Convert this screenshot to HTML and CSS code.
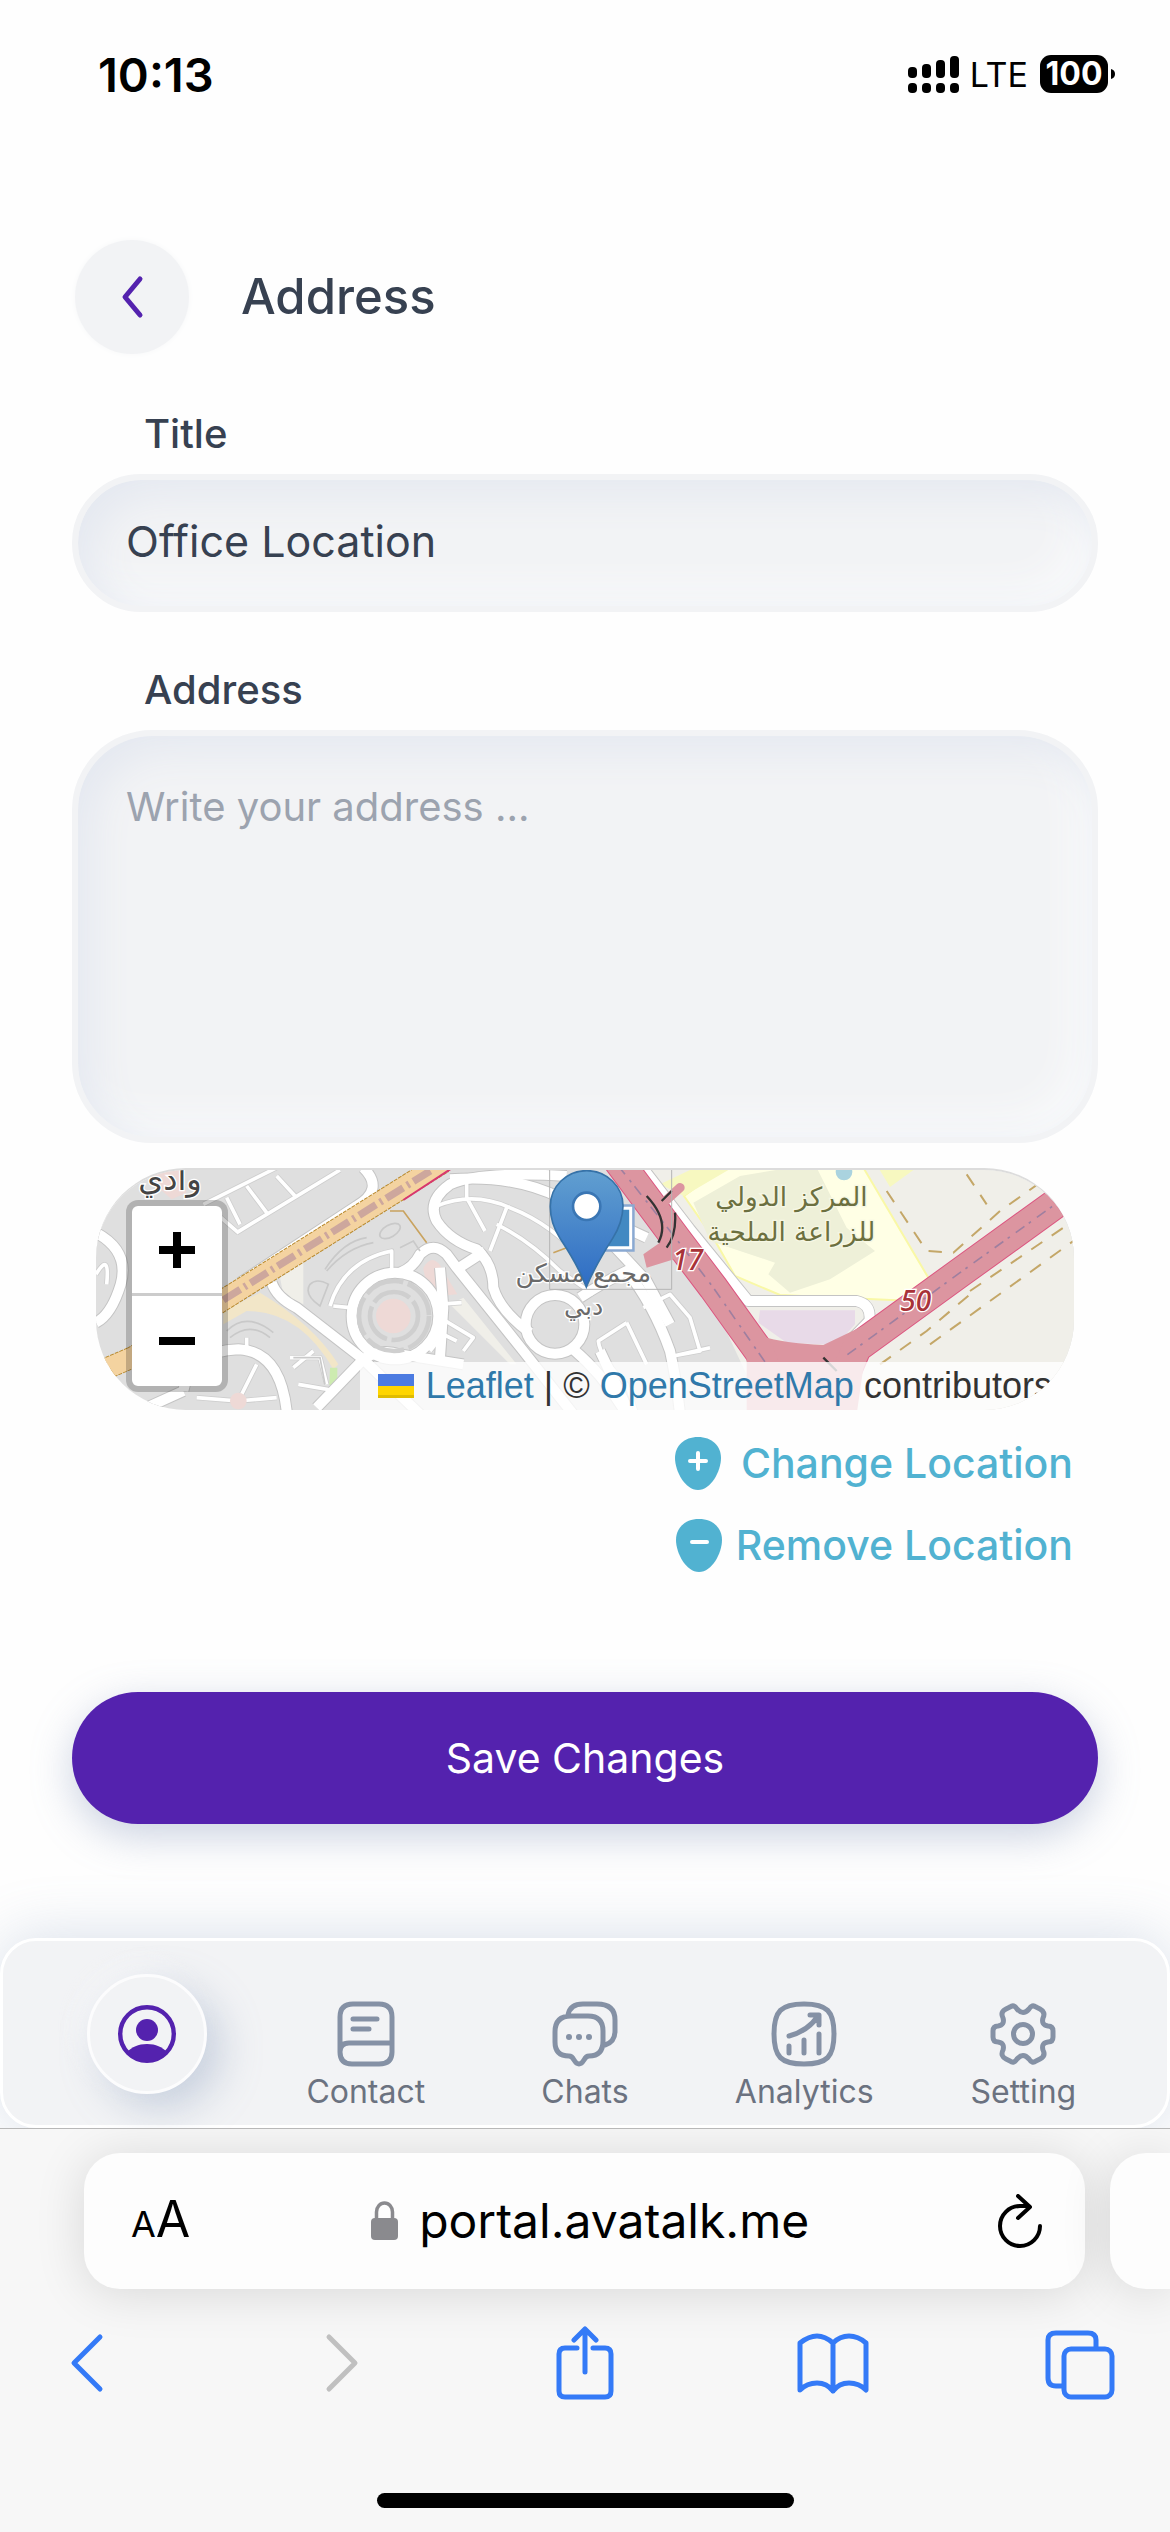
FILE: index.html
```html
<!DOCTYPE html>
<html lang="en">
<head>
<meta charset="utf-8">
<meta name="viewport" content="width=device-width, initial-scale=1">
<title>Address</title>
<link rel="stylesheet" href="styles.css">
</head>
<body>
<div class="status">
  <span class="status-time">10:13</span>
  <div class="status-right">
    <svg class="signal" viewBox="0 0 52 38" aria-hidden="true">
      <rect x="0" y="12" width="9" height="11" rx="4"/><rect x="14" y="9" width="9" height="14" rx="4"/><rect x="28" y="5" width="9" height="18" rx="4"/><rect x="42" y="1" width="9" height="22" rx="4"/>
      <rect x="0" y="28" width="9" height="10" rx="4"/><rect x="14" y="28" width="9" height="10" rx="4"/><rect x="28" y="28" width="9" height="10" rx="4"/><rect x="42" y="28" width="9" height="10" rx="4"/>
    </svg>
    <span class="network">LTE</span>
    <span class="battery">100</span>
    <svg class="battery-tip" viewBox="0 0 4 10" aria-hidden="true"><path d="M0 0Q4 1 4 5T0 10Z"/></svg>
  </div>
</div>

<main class="page">
  <header class="head">
    <button class="back" type="button" aria-label="Back"><svg viewBox="0 0 24 44"><path d="M20 4 5 22l15 18"/></svg></button>
    <h1 class="title">Address</h1>
  </header>

  <form class="form">
    <label class="label" for="title">Title</label>
    <input class="field" id="title" type="text" value="Office Location">
    <label class="label label-next" for="address">Address</label>
    <textarea class="field field-area" id="address" placeholder="Write your address ..."></textarea>

    <div class="map">
      <svg class="map-art" viewBox="48 57 2934 720" preserveAspectRatio="xMidYMid slice" aria-hidden="true">
        <defs>
          <g id="wide">
            <path d="M850 50Q915 115 830 165L480 395"/>
            <path d="M1460 75Q1200 60 1110 100Q1040 150 1070 210Q1110 270 1190 295Q1240 340 1240 410Q1260 480 1350 545"/>
            <path d="M1110 85Q1300 70 1440 140L1700 260"/>
            <path d="M575 395Q590 440 650 470L850 625L1020 790"/>
            <path d="M850 625Q900 590 960 610L1150 640"/>
            <path d="M960 365Q1000 350 1020 310Q1060 270 1100 310L1130 350L1330 600L1480 790"/>
            <path d="M1215 300L1130 355M1080 350L1090 470L1080 620"/>
            <path d="M48 245Q150 300 122 400Q95 490 48 515"/>
            <path d="M1500 440Q1560 400 1640 360Q1720 460 1770 600Q1790 690 1800 790"/>
            <path d="M1560 240L1700 390L1770 520"/>
            <path d="M1480 595Q1570 670 1640 790M1560 600L1650 790"/>
            <circle cx="1425" cy="520" r="88"/>
            <circle cx="945" cy="495" r="130"/>
            <path d="M310 720Q330 600 475 595Q600 600 620 780M200 770L310 720M850 625L710 770"/>
            <path d="M1680 40L1830 235L2005 450L2330 450Q2375 460 2368 510L2290 590"/>
          </g>
          <g id="narrow">
            <path d="M370 160L590 50M470 245L780 57M400 180L475 245M590 75L650 140M500 105L560 185M440 140L480 220"/>
            <path d="M1160 85V140L1215 240M1280 170L1230 300M1070 165Q1180 120 1290 170Q1420 220 1520 340M1250 220Q1350 270 1440 360L1540 430"/>
            <path d="M750 465Q790 330 935 300V370M760 465L810 470"/>
            <path d="M1070 460L1145 455M1080 500L1180 560L1150 600M1050 600L1090 550L1130 570"/>
            <path d="M1640 515L1555 570Q1560 620 1640 700L1670 790M1640 515L1700 640M1690 470L1770 430L1830 500L1860 600L1780 615L1890 590"/>
            <path d="M500 560V600M530 640L475 750L350 740M475 750L590 740M630 620L720 620L740 700"/>
            <path d="M640 650L700 600M655 700L770 720"/>
            <path d="M48 370Q90 300 80 400"/>
          </g>
          <linearGradient id="pin" x1="0" y1="0" x2="0" y2="1"><stop offset="0" stop-color="#619fd0"/><stop offset="1" stop-color="#2e6cc4"/></linearGradient>
        </defs>
        <path class="m-home" d="M0 0H3000V800H0Z"/>
        <path class="m-land" d="M1680 40H3000V800H2060L1850 350Z"/>
        <path class="m-land" d="M600 380L670 330V460L610 430ZM1150 440L1310 640L1290 640L1110 460Z"/>
        <path class="m-sand" d="M430 480L540 425Q700 520 775 640L760 655Q660 480 500 480L430 520Z"/>
        <path class="m-green" d="M750 650H772V690L760 715L748 700Z"/>
        <path class="m-field" d="M1812 135L1930 50H2350L2545 380L2500 450L2100 432L1965 375L1900 260Z"/>
        <path class="m-lime" d="M1740 100L1830 57H1945L1812 135ZM2395 50H2510L2430 108Z"/>
        <path class="m-crop" d="M1840 155L1980 75L2130 50H2210L2300 230L2385 300L2250 385L2130 425L2065 370L2085 335L1890 270Z"/>
        <circle class="m-water" cx="2292" cy="63" r="25"/>
        <path class="m-lilac" d="M2040 478H2325V520L2270 582L2120 575L2035 515Z"/>
        <path class="m-pink" d="M1030 350Q1060 300 1090 360L1132 430L1075 435Q1030 390 1030 350ZM215 57H300L320 125L275 145L235 110ZM380 75L420 57"/>
        <g class="m-case-narrow"><use href="#narrow"/></g>
        <g class="m-case-wide"><use href="#wide"/></g>
        <g class="m-street-narrow"><use href="#narrow"/></g>
        <g class="m-street-wide"><use href="#wide"/></g>
        <circle class="m-ring" cx="942" cy="495" r="105"/><circle class="m-ring" cx="942" cy="495" r="72"/>
        <circle class="m-pink" cx="940" cy="495" r="52"/>
        <circle class="m-pink" cx="475" cy="750" r="25"/>
        <g class="m-block"><path d="M735 355Q790 270 860 260M740 360Q800 290 880 275"/><ellipse cx="930" cy="240" rx="34" ry="18" transform="rotate(-30 930 240)"/><path d="M690 400Q670 430 720 465L745 400Q710 380 690 400ZM960 290L1000 270L1020 300M440 540Q500 480 580 545M450 560Q510 510 570 560M640 620H720L735 700"/></g>
        <path class="m-trunk-case" d="M20 678L160 618L430 447L1090 34"/><path class="m-trunk" d="M20 678L160 618L430 447L1090 34"/>
        <path class="m-rail" d="M430 447L1060 54"/>
        <path class="m-motor-edge" d="M970 147L1115 52"/>
        <path class="m-track" d="M930 180H970L1040 275M1420 305L1460 290"/>
        <g class="m-motor-case"><path d="M1615 30L1790 265L1900 410L2040 605L2110 790"/><path d="M3000 105L2640 365L2330 590L2240 800"/></g>
        <path class="m-motor-fill" d="M1690 310L1790 240L1830 310L1700 350ZM2000 535Q2060 575 2230 582L2400 500L2350 650L2330 790H2000Z"/>
        <g class="m-motor"><path d="M1615 30L1790 265L1900 410L2040 605L2110 790"/><path d="M3000 105L2640 365L2330 590L2240 800"/></g>
        <path class="m-spur" d="M1800 110L1745 160"/>
        <g class="m-centre"><path d="M1615 45L1790 265L1900 410L2060 640M2960 135L2640 365L2290 620"/></g>
        <path class="m-bridge" d="M1700 135Q1770 210 1735 275M1745 150L1775 120M1785 185Q1790 250 1760 290M2230 620L2270 660"/>
        <path class="m-track-dash" d="M2660 70L2720 160M2420 120L2540 300L2620 305L2760 180L2880 95M2670 420L2980 210M2550 580L2980 270M2400 640L2540 540L2670 430"/>
        <g class="m-label">
          <text class="m-town" x="270" y="118" text-anchor="middle">وادي</text>
          <text class="m-estate" x="1510" y="392" text-anchor="middle">مجمع مسكن</text>
          <text class="m-estate" x="1511" y="492" text-anchor="middle">دبي</text>
          <text class="m-olive" x="2134" y="165" text-anchor="middle">المركز الدولي</text>
          <text class="m-olive" x="2134" y="270" text-anchor="middle">للزراعة الملحية</text>
          <text class="m-route" x="1823" y="358" text-anchor="middle">17</text>
          <text class="m-route" x="2507" y="480" text-anchor="middle">50</text>
        </g>
        <path class="m-frame" d="M1409 50H1775V415H1409Z"/>
        <path class="m-alt" d="M1550 164H1660V298H1550Z"/><path class="m-alt-in" d="M1550 172H1652V290H1550Z"/>
        <path class="m-pin" d="M1519 408Q1495 345 1440 262Q1410 215 1411 165A109 106 0 0 1 1629 165Q1628 215 1598 262Q1545 345 1519 408Z"/>
        <circle class="m-hole" cx="1520" cy="166" r="41"/>
      </svg>
      <div class="zoom"><button class="zoom-btn" type="button" aria-label="Zoom in"><svg viewBox="0 0 36 36"><path d="M14 0h8v14h14v8H22v14h-8V22H0v-8h14z"/></svg></button><button class="zoom-btn" type="button" aria-label="Zoom out"><svg viewBox="0 0 36 36"><path d="M0 14h36v8H0z"/></svg></button></div>
      <p class="credit"><a class="credit-link" href="#leaflet"><svg class="flag" viewBox="0 0 12 8" aria-hidden="true"><path fill="#4c7be1" d="M0 0h12v4H0z"/><path fill="#ffd500" d="M0 4h12v3H0z"/><path fill="#e0bc00" d="M0 7h12v1H0z"/></svg> Leaflet</a> | © <a class="credit-link" href="#osm">OpenStreetMap</a> contributors</p>
    </div>

    <div class="actions">
      <button class="action" type="button"><svg class="action-icon" viewBox="0 0 46 53" aria-hidden="true"><path d="M23 0C9 0 0 9 0 21c0 13 10 32 23 32s23-19 23-32C46 9 37 0 23 0Z"/><path class="sign" d="M15 24h16M23 16v16"/></svg><span>Change Location</span></button>
      <button class="action action-tight" type="button"><svg class="action-icon" viewBox="0 0 46 53" aria-hidden="true"><path d="M23 0C9 0 0 9 0 21c0 13 10 32 23 32s23-19 23-32C46 9 37 0 23 0Z"/><path class="sign" d="M16 23h15"/></svg><span>Remove Location</span></button>
    </div>

    <button class="save" type="submit">Save Changes</button>
  </form>
</main>

<nav class="tabs">
  <a class="tab tab-on" href="#profile" aria-label="Profile"><span class="disc"><svg viewBox="0 0 58 58"><circle cx="29" cy="29" r="26.800" fill="none" stroke="currentColor" stroke-width="4.400"/><circle cx="29" cy="25" r="11"/><path d="M9 47C14 42 20 39 29 39s15 3 20 8C44 54 37 57 29 57S14 54 9 47Z"/></svg></span></a>
  <a class="tab" href="#contact"><svg class="tab-icon" viewBox="0 0 66 66"><path d="M7 51V16Q7 3 20 3H46Q59 3 59 16V51Q59 63 46 63H19Q7 63 7 51Q7 42 16 42H59M20 18H44M20 28H36"/></svg><span>Contact</span></a>
  <a class="tab" href="#chats"><svg class="tab-icon" viewBox="0 0 66 66"><path d="M16 14Q18 3 31 3H45Q63 3 63 19V30Q63 41 53 44M3 33V31Q3 15 19 15H36Q51 15 51 30V40Q51 55 37 55Q34 55 32 59Q27 67 22 59Q20 55 17 55Q3 55 3 41Z"/><g class="dots"><circle cx="17" cy="36" r="3"/><circle cx="27" cy="36" r="3"/><circle cx="37" cy="36" r="3"/></g></svg><span>Chats</span></a>
  <a class="tab" href="#analytics"><svg class="tab-icon" viewBox="0 0 66 66"><path d="M3 33C3 10 10 3 33 3S63 10 63 33S56 63 33 63S3 56 3 33ZM18 45V52M33 39V52M48 33V52M18 35Q37 30 47 15M39 14H48V24"/></svg><span>Analytics</span></a>
  <a class="tab" href="#setting"><svg class="tab-icon" viewBox="0 0 66 66"><circle cx="33" cy="33" r="9.500"/><path d="M27 8Q24 3 20 6L16 8Q10 11 13 17Q15 24 8 25Q3 25 3 30V36Q3 41 8 41Q15 42 13 49Q10 55 16 58L20 60Q24 63 27 58Q33 51 39 58Q42 63 46 60L50 58Q56 55 53 49Q51 42 58 41Q63 41 63 36V30Q63 25 58 25Q51 24 53 17Q56 11 50 8L46 6Q42 3 39 8Q33 15 27 8Z"/></svg><span>Setting</span></a>
</nav>

<footer class="browser">
  <div class="address-row">
    <div class="address-bar">
      <button class="reader" type="button" aria-label="Page settings"><span class="reader-small">A</span><span class="reader-big">A</span></button>
      <div class="host"><svg class="lock" viewBox="0 0 27 40" aria-hidden="true"><path d="M5.500 18V11a8 9 0 0 1 16 0v7" fill="none" stroke="currentColor" stroke-width="3.500"/><rect y="17" width="27" height="22" rx="4"/></svg><span>portal.avatalk.me</span></div>
      <button class="reload" type="button" aria-label="Reload"><svg viewBox="0 0 44 54"><path d="M42 32A20 20 0 1 1 22 12H31M20 2 32 13 20 24"/></svg></button>
    </div>
    <div class="next-bar"></div>
  </div>
  <div class="tools">
    <button class="tool" type="button" aria-label="Back"><svg viewBox="0 0 72 74"><path d="M46 11 20 37 46 63"/></svg></button>
    <button class="tool tool-off" type="button" aria-label="Forward" disabled><svg viewBox="0 0 72 74"><path d="M27 11 53 37 27 63"/></svg></button>
    <button class="tool" type="button" aria-label="Share"><svg viewBox="0 0 72 74"><path d="M28 22H16Q10 22 10 28V65Q10 71 16 71H56Q62 71 62 65V28Q62 22 56 22H44M36 46V3M25 14 36 3 47 14"/></svg></button>
    <button class="tool" type="button" aria-label="Bookmarks"><svg viewBox="0 0 72 74"><path d="M36 17Q28 10 20 10T3 17V64Q10 57 20 57T36 65Q42 57 52 57T69 64V17Q61 10 52 10T36 17V65"/></svg></button>
    <button class="tool" type="button" aria-label="Tabs"><svg viewBox="0 0 72 74"><path d="M18 60H12Q4 60 4 52V14Q4 7 12 7H44Q52 7 52 14V22"/><rect x="20" y="23" width="48" height="48" rx="7"/></svg></button>
  </div>
  <div class="home-bar"></div>
</footer>
</body>
</html>
```
FILE: styles.css
```css
*, *::before, *::after { box-sizing: border-box; }
body {
  margin: 0;
  min-height: 100vh;
  display: flex;
  flex-direction: column;
  background: #fefefe;
  color: #374151;
  font-family: Inter, "Open Sans", sans-serif;
  overflow-x: hidden;
}
button { margin: 0; padding: 0; border: 0; background: none; font: inherit; color: inherit; }
svg { display: block; }
a { color: inherit; text-decoration: none; }

/* Status bar */
.status {
  display: flex;
  align-items: center;
  justify-content: space-between;
  height: 148px;
  padding: 0 55px 0 98px;
  color: #000;
}
.status-time { font-size: 47px; font-weight: 600; }
.status-right { display: flex; align-items: center; }
.signal { width: 52px; height: 38px; margin-right: 10px; }
.network { font-size: 34px; margin-right: 12px; }
.battery {
  width: 68px;
  height: 38px;
  border-radius: 11px;
  background: #000;
  color: #fff;
  font-size: 32px;
  font-weight: 700;
  line-height: 38px;
  text-align: center;
}
.battery-tip { width: 4px; height: 10px; margin-left: 3px; }

/* Form */
.page { padding: 92px 72px 0; }
.head { display: flex; align-items: center; gap: 52px; padding-left: 3px; }
.back {
  display: grid;
  place-items: center;
  width: 114px;
  height: 114px;
  border-radius: 50%;
  background: #f2f3f5;
  box-shadow: 0 0 6px #f7f8f9;
}
.back svg { width: 24px; height: 44px; fill: none; stroke: #5422ae; stroke-width: 5px; stroke-linecap: round; stroke-linejoin: round; }
.title { margin: 0; font-size: 49px; font-weight: 500; line-height: 58px; }
.form { display: flex; flex-direction: column; padding-top: 56px; }
.label { padding: 0 72px; font-size: 40px; font-weight: 500; line-height: 48px; }
.label-next { margin-top: 54px; }
.field {
  width: 100%;
  height: 138px;
  margin: 16px 0 0;
  padding: 0 48px 4px;
  border: 6px solid #f2f3f5;
  border-radius: 69px;
  outline: 0;
  background: #f2f3f5;
  box-shadow: inset 14px 14px 40px #e4e8f0, inset -14px -14px 40px #fafbfc;
  color: #374151;
  font: 400 43px/58px Inter, "Open Sans", sans-serif;
}
.field-area { height: 413px; padding: 42px 48px; border-radius: 80px; resize: none; }
.field-area::placeholder { color: #9ca3af; font-size: 40px; opacity: 1; }

/* Map */
.map {
  position: relative;
  height: 242px;
  margin: 25px 24px 0;
  border-top: 2px solid #dcdcdc;
  border-radius: 90px;
  overflow: hidden;
}
.map-art { width: 100%; height: 240px; }
.zoom {
  position: absolute;
  top: 30px;
  left: 30px;
  width: 102px;
  border: 6px solid rgba(0, 0, 0, .2);
  border-radius: 12px;
  background: #fff;
  background-clip: padding-box;
}
.zoom-btn { display: grid; place-items: center; width: 90px; height: 90px; }
.zoom-btn:first-child { border-bottom: 3px solid #ccc; }
.zoom-btn svg { width: 36px; height: 36px; }
.credit {
  position: absolute;
  right: 0;
  bottom: 0;
  margin: 0;
  padding: 0 22px 0 18px;
  background: rgba(255, 255, 255, .8);
  color: #333;
  font: 36px/48px "Liberation Sans", Arial, sans-serif;
  white-space: nowrap;
}
.credit-link { color: #3079aa; }
.flag { display: inline-block; width: 36px; height: 24px; margin-right: 2px; }
.m-home { fill: #dfdfdf; }
.m-land { fill: #f0efe9; }
.m-sand { fill: #f2e6c8; }
.m-green { fill: #cdebb0; }
.m-field { fill: #ffffe5; stroke: #f9f8a6; stroke-width: 6px; }
.m-lime { fill: #f7f8c0; }
.m-crop { fill: #eef0d8; }
.m-water { fill: #aad3df; }
.m-lilac { fill: #e8dae8; }
.m-pink { fill: #eed9d6; }
.m-case-narrow, .m-case-wide, .m-street-narrow, .m-street-wide { fill: none; stroke-linejoin: round; }
.m-case-narrow { stroke: #cecece; stroke-width: 16px; }
.m-case-wide { stroke: #c4c4c4; stroke-width: 36px; }
.m-street-narrow { stroke: #fff; stroke-width: 11px; }
.m-street-wide { stroke: #fff; stroke-width: 30px; }
.m-ring { fill: none; stroke: #cfcfcf; stroke-width: 14px; stroke-dasharray: 120 14; }
.m-block { fill: none; stroke: #c9c9c9; stroke-width: 5px; }
.m-trunk-case { fill: none; stroke: #b98a2e; stroke-width: 66px; stroke-dasharray: 12 3; }
.m-trunk { fill: none; stroke: #f4d3a0; stroke-width: 60px; }
.m-rail { fill: none; stroke: #cda79d; stroke-width: 22px; stroke-dasharray: 60 14 8 14; }
.m-motor-edge { fill: none; stroke: #d8366f; stroke-width: 6px; }
.m-motor-case { fill: none; stroke: #dc5680; stroke-width: 92px; }
.m-motor { fill: none; stroke: #dc95a0; stroke-width: 86px; }
.m-motor-fill { fill: #dc95a0; }
.m-spur { fill: none; stroke: #dc95a0; stroke-width: 28px; stroke-linecap: round; }
.m-centre { fill: none; stroke: #9f7f9f; stroke-width: 5px; stroke-dasharray: 32 22 8 16; }
.m-bridge { fill: none; stroke: #333; stroke-width: 7px; }
.m-track { fill: none; stroke: #c9a35f; stroke-width: 5px; }
.m-track-dash { fill: none; stroke: #c4a768; stroke-width: 6px; stroke-dasharray: 40 34; }
.m-label { fill: #6a6a6a; stroke: #fff; stroke-width: 8px; paint-order: stroke; font-family: "DejaVu Sans", sans-serif; direction: rtl; }
.m-town { fill: #444; font-size: 96px; }
.m-estate { font-size: 76px; }
.m-olive { fill: #6c7040; stroke: #f6f7e4; font-size: 79px; }
.m-route { fill: #a83238; direction: ltr; font-family: "Noto Sans", sans-serif; font-size: 84px; font-style: italic; font-weight: 500; }
.m-frame { fill: none; stroke: #b5b5b5; stroke-width: 3px; }
.m-alt { fill: #fff; stroke: #8aa9d2; stroke-width: 8px; }
.m-alt-in { fill: #4289c2; stroke: #fff; stroke-width: 9px; }
.m-pin { fill: url(#pin); stroke: #3672a8; stroke-width: 5px; }
.m-hole { fill: #fff; stroke: #3a76b4; stroke-width: 8px; }

/* Location actions */
.actions { display: flex; flex-direction: column; align-items: flex-end; gap: 24px; padding: 24px 25px 0; }
.action { display: flex; align-items: center; gap: 20px; color: #51b2d1; font-size: 41px; font-weight: 500; line-height: 58px; }
.action-tight { gap: 14px; }
.action-icon { width: 46px; height: 53px; fill: currentColor; }
.sign { fill: none; stroke: #fff; stroke-width: 4px; stroke-linecap: round; }
.save {
  height: 132px;
  margin-top: 118px;
  border-radius: 66px;
  background: #5422ae;
  box-shadow: 0 12px 40px rgba(120, 140, 180, .38);
  color: #fff;
  font-size: 41px;
}

/* App tabs */
.tabs {
  display: grid;
  grid-template-columns: repeat(5, 1fr);
  height: 190px;
  margin-top: 114px;
  padding: 0 34px;
  border: 3px solid #fff;
  border-radius: 36px;
  background: #f2f3f5;
  box-shadow: 0 0 60px rgba(110, 135, 175, .28);
  color: #6b7280;
}
.tab { display: flex; flex-direction: column; align-items: center; gap: 7px; padding-top: 60px; font-size: 32px; line-height: 36px; }
.tab-on { padding-top: 33px; }
.tab-icon { width: 66px; height: 66px; fill: none; stroke: #8591a5; stroke-width: 5px; stroke-linecap: round; stroke-linejoin: round; }
.dots { fill: #8591a5; stroke: none; }
.disc {
  display: grid;
  place-items: center;
  width: 120px;
  height: 120px;
  border: 3px solid #fcfcfd;
  border-radius: 50%;
  background: #f2f3f5;
  box-shadow: 14px 14px 40px rgba(130, 150, 185, .38), -8px -8px 30px rgba(250, 250, 252, .6);
  color: #5422ae;
}
.disc svg { width: 58px; height: 58px; fill: currentColor; }

/* Browser chrome */
.browser { position: relative; flex: 1; display: flex; flex-direction: column; border-top: 1px solid #b8b8b8; background: #f7f7f7; color: #000; overflow: hidden; }
.address-row { display: flex; gap: 25px; padding: 24px 0 0 84px; }
.address-bar, .next-bar { height: 136px; background: #fdfdfd; box-shadow: 0 4px 50px rgba(0, 0, 0, .13); }
.address-bar { flex: 1; display: flex; align-items: center; justify-content: space-between; padding: 0 43px 0 47px; border-radius: 36px; }
.next-bar { width: 60px; border-radius: 36px 0 0 36px; }
.reader { display: flex; align-items: baseline; line-height: 60px; }
.reader-small { font-size: 36px; }
.reader-big { font-size: 50px; }
.host { display: flex; align-items: center; gap: 21px; margin-right: 8px; font-size: 48px; line-height: 60px; }
.lock { width: 27px; height: 40px; color: #8a8a8e; fill: currentColor; }
.reload svg { width: 44px; height: 54px; fill: none; stroke: #000; stroke-width: 4px; stroke-linecap: round; stroke-linejoin: round; }
.tools { display: flex; justify-content: space-between; padding: 37px 54px 0; }
.tool { color: #347af7; }
.tool-off { color: #c0c0c0; }
.tool svg { width: 72px; height: 74px; fill: none; stroke: currentColor; stroke-width: 5px; stroke-linecap: round; stroke-linejoin: round; }
.home-bar { width: 417px; height: 15px; margin: auto auto 24px; border-radius: 8px; background: #000; }
```
